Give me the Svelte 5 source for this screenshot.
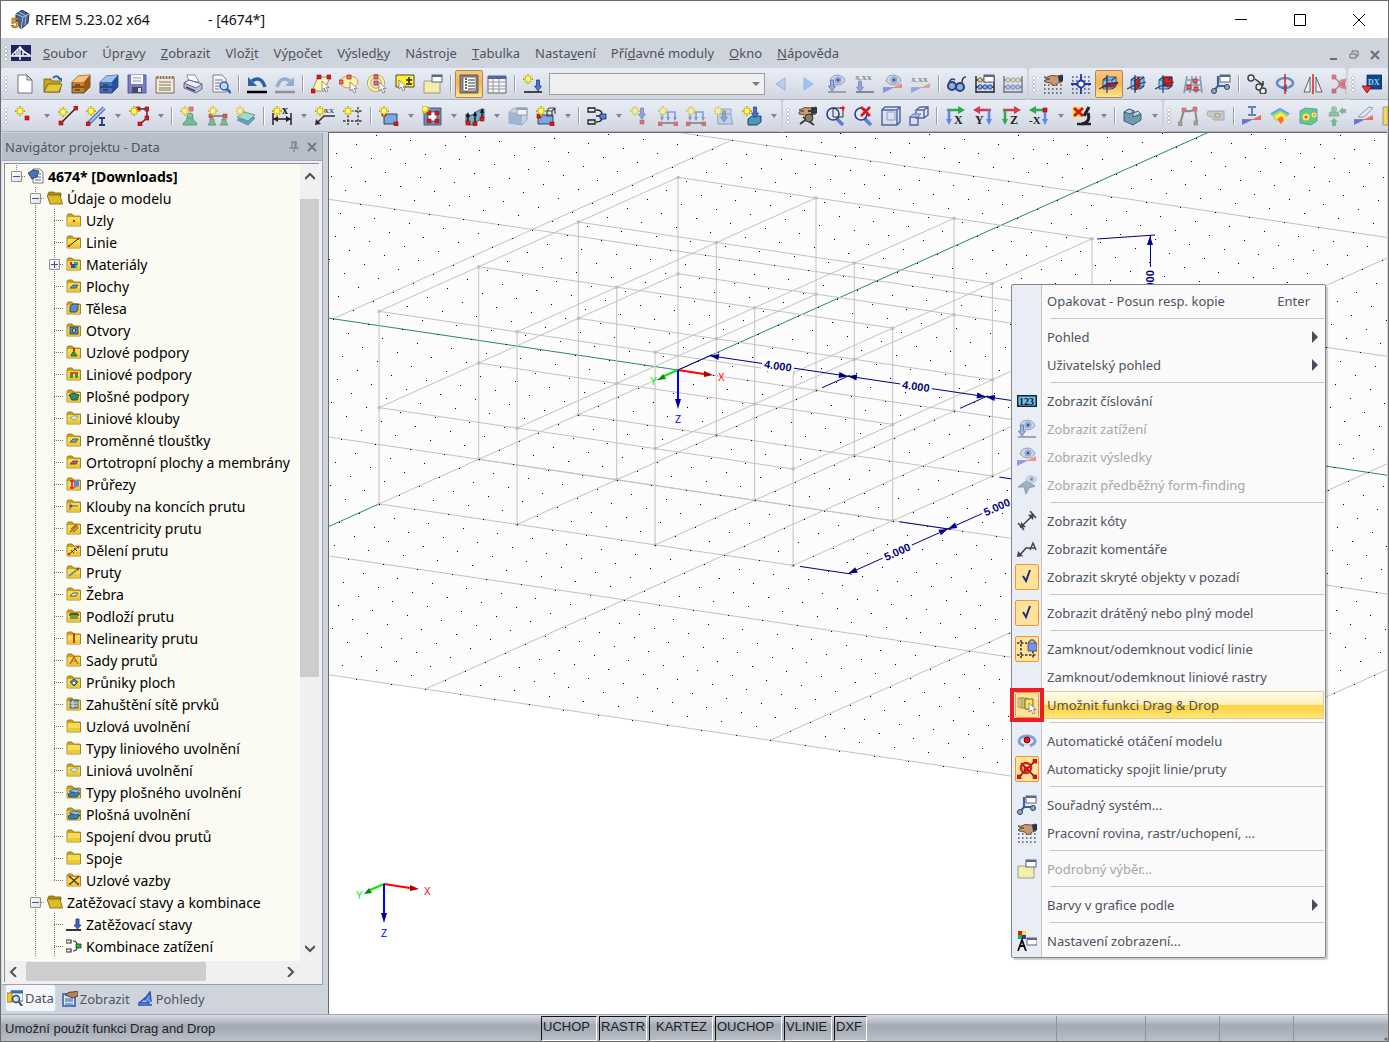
<script lang="ts">
  // ---------- icon parts ----------
  const star = (x = 0, y = 0) =>
    `<g transform="translate(${x} ${y})"><path d="M5 0v10M0 5h10M2 2l6 6M8 2l-6 6" stroke="#b3a21c" stroke-width="1.800"/><path d="M5 1v8M1 5h8M2.500 2.500l5 5M7.500 2.500l-5 5" stroke="#fff13a" stroke-width="1.200"/><circle cx="5" cy="5" r="2" fill="#fff97a"/></g>`;
  const node = (x: number, y: number, c = '#e01818') =>
    `<rect x="${x - 2}" y="${y - 2}" width="4" height="4" fill="${c}" stroke="#8a1010" stroke-width=".6"/>`;
  const faded = (s: string) => `<g opacity=".55">${s}</g>`;
  const line = (d: string, c = '#222', w = 1.4) => `<path d="${d}" fill="none" stroke="${c}" stroke-width="${w}"/>`;
  const fill = (d: string, c: string, s = 'none') => `<path d="${d}" fill="${c}" stroke="${s}" stroke-width=".8"/>`;
  const eye = (x: number, y: number) =>
    `<g transform="translate(${x} ${y})"><path d="M0 6Q1 0 8 0Q14 1 15 6Q12 10 8 10Q3 10 0 6z" fill="#c6cfe0" stroke="#77829c"/><circle cx="8" cy="5" r="3.500" fill="#6a8fdc"/><circle cx="8" cy="5" r="1.300" fill="#112"/></g>`;
  const cursor = (x: number, y: number) =>
    `<path transform="translate(${x} ${y})" d="M0 0v9l2.200-2 1.800 4 2-1-1.800-3.500h3z" fill="#fff" stroke="#777" stroke-width=".8"/>`;
  const label = (t: string, x: number, y: number, c = '#222', s = 9) =>
    `<text x="${x}" y="${y}" font-family="Liberation Serif" font-weight="bold" font-size="${s}" fill="${c}">${t}</text>`;
  const down = (x: number, y: number, c = '#4a74d4') =>
    fill(`M${x - 1.5} ${y}h3v6h2l-3.500 5-3.500-5h2z`, c, '#2a3f80');
  const win = (x: number, y: number) =>
    `<rect x="${x}" y="${y}" width="10" height="7" fill="#fff" stroke="#5b6579"/><path d="M${x} ${y + 1}h10" stroke="#5a678c" stroke-width="2"/>`;
  const drawer = (a: string, b: string, c: string) =>
    fill('M1 8l6-6 12-1v12l-6 6H1z', b, '#333') + fill('M1 8l6-6 12-1-6 7z', a) + fill('M13 8l6-7v12l-6 6z', c) + line('M1 13h12M4 11h5M4 16h5', '#222', 1.2);
  const triad = (b: string) =>
    fill('M4 6h9v9H4zM8 3h9v9H8z', '#8fc3ea', '#15466f') + fill(b, '#e01c1c', '#700') + line('M0 15l8-4 11-3M8 1v18M4 6l4-3M13 6l4-3M13 15l4-3', '#15466f', 1.2);
  const dots = (c = '#555') => `<path d="M1 3h18M1 7h18M1 11h18M1 15h18M1 19h18" stroke="${c}" stroke-width="1.600" stroke-dasharray="1.600 2.400"/>`;
  const hand = fill('M2 4q6-4 12-2l5-1v7l-4 1q-3 4-6 2l-1-2-6-1v-2l5-1z', '#c89a72', '#5a3a22') + fill('M15 2l5-1v6l-4 1z', '#26324e');
  const axes = (h: string, v: string, flip: boolean) =>
    `<g${flip ? ' transform="translate(20 0) scale(-1 1)"' : ''}><path d="M2 4h12" stroke="${h}" stroke-width="2.500"/><path d="M13 0l7 4-7 4z" fill="${h}"/><path d="M4 4v10" stroke="${v}" stroke-width="2.500"/><path d="M1 13h6l-3 6z" fill="${v}"/></g>`;
  const ribbon = fill('M0 13h19v1H0z', '#888') + fill('M19 9v5H9z', '#ee6a6a') + fill('M0 19v-5h10z', '#6a70ee');
  const abacus =
    line('M1 2v17M19 2v17M1 18h18M1 6h18M1 13h18', '#222', 1.4) +
    [4, 9, 14].map((x) => `<circle cx="${x + 1}" cy="6" r="2.200" fill="#e8d878" stroke="#665"/><circle cx="${x + 1}" cy="13" r="2.200" fill="#8fb0f8" stroke="#2a3f90"/>`).join('');
  const magnifier = '<path d="M11 12l7 7" stroke="#5a7fd8" stroke-width="3.500"/><circle cx="8" cy="8" r="6" fill="#dbe8fa" stroke="#2d3f7c" stroke-width="1.600"/>';
  const boxes = line('M1 2h7v4H1zM1 14h7v4H1z', '#222', 1.3) + line('M9 4q6 0 6 4M9 16q6 0 6-4', '#222', 1.3);
  const coord = line('M7 2v10l-5 6M7 12h10', '#3d62a4', 2.2) + '<circle cx="3" cy="17" r="2.500" fill="#88a8dc" stroke="#345"/><circle cx="16" cy="13" r="2.500" fill="#88a8dc" stroke="#345"/>' + win(9, 1);
  const person = '<circle cx="10" cy="10" r="3" fill="#5cc07c" stroke="#2a6a40"/>' + fill('M7 12h6l1 3q3 1 3 4H3q0-3 3-4z', '#4fb070', '#2a6a40');
  const panes = line('M1 3h4v9H1zM3 3h4v10H3zM5 3h5v10H5z', '#a89c60', 1) + fill('M8 4h8v10H8z', '#ffe84a', '#444');

  const icons: Record<string, string> = {
    new: fill('M3 1h9l5 5v13H3z', '#fff', '#555') + fill('M12 1v5h5z', '#ddd', '#555'),
    open: fill('M1 5h7l1 2h8v11H1z', '#c9a51c', '#6b5a10') + fill('M1 18l4-8h14l-3 8z', '#e4c83a', '#6b5a10') + line('M10 4q4-4 7 1', '#3b69a8', 2) + fill('M14 4h5v4z', '#3b69a8'),
    base: drawer('#f4c27a', '#c98028', '#9a5c12'),
    blue: drawer('#9cc0f0', '#3f70c8', '#26509c'),
    save: fill('M1 1h18v18H1z', '#7a7cc4', '#44468a') + fill('M4 1h12v9H4z', '#f4f6fa') + line('M6 4h8M6 7h8', '#99a', 1) + fill('M5 13h10v6H5z', '#444a66') + fill('M11 14h3v4h-3z', '#ddd'),
    notes: fill('M1 3h18v16H1z', '#f6ead6', '#6b4a30') + fill('M2 2h16v3H2z', '#8c6848') + line('M4 1v4M7 1v4M10 1v4M13 1v4M16 1v4', '#fff', 1) + line('M4 8h12M4 11h12M4 14h12M4 16h12', '#776', 1),
    print: fill('M4 1h8l4 7H6z', '#fff', '#778') + fill('M1 9l5-3 13 4v5l-6 4-12-5z', '#b9bfe2', '#4c4f74') + fill('M1 9l5-3 13 4-6 4z', '#eef0f8', '#4c4f74') + line('M3 13l9 4', '#444', 1.5),
    preview: fill('M2 1h9l4 4v13H2z', '#f4f6fa', '#667') + line('M4 6h8M4 9h5M4 12h4M4 15h4', '#778', 1.2) + '<circle cx="13" cy="12" r="4" fill="#bcd6f4" stroke="#2d62a8" stroke-width="1.500"/><path d="M16 15l4 4" stroke="#2d62a8" stroke-width="2.500"/>',
    undo: line('M5 7q9-6 13 6', '#2f5fa6', 3.5) + fill('M1 3v9h9z', '#2f5fa6') + line('M0 18h20', '#000', 2.5),
    redo: faded(line('M15 7q-9-6-13 6', '#4f84bc', 3.5) + fill('M19 3v9h-9z', '#4f84bc') + line('M0 18h20', '#555', 2.5)),
    selPoly: fill('M1 17L7 3h12l-6 14z', '#fdf8b0', '#777') + node(2, 17) + node(8, 3) + node(18, 3) + cursor(11, 7),
    selOval: '<ellipse cx="10" cy="8" rx="9" ry="6" fill="#fbf3a8" stroke="#c89a60"/>' + node(2, 8, '#f07070') + node(10, 3, '#f07070') + cursor(11, 8),
    selRing: '<circle cx="9" cy="9" r="7" fill="none" stroke="#b8a040" stroke-width="4"/><circle cx="9" cy="9" r="7" fill="none" stroke="#fbf3a8" stroke-width="2.500"/>' + node(9, 9, '#f07070') + node(9, 3, '#f07070') + cursor(12, 8),
    selAdd: fill('M1 1h18v12H1z', '#ffef30', '#222') + line('M14 3v6M11 6h6M11 10h6', '#222', 1.5) + cursor(4, 6),
    detail: fill('M1 7h16v12H1z', '#f3eeae', '#8a8870') + win(9, 1),
    nav: fill('M1 1h18v18H1z', '#8a8a8a', '#444') + fill('M4 3h13v14H4z', '#fff', '#555') + line('M9 6h7M9 9h7M9 12h7M9 15h7', '#333', 1.2) + line('M6 5h2M6 8h2M6 11h2M6 14h2', '#333', 1.5),
    table: fill('M1 2h18v17H1z', '#f6f6fa', '#444') + fill('M1 2h18v3H1z', '#50699c') + line('M1 8h18M1 12h18M1 15h18M6 5v14M12 5v14', '#999', 1),
    loadCase: star(0, 0) + line('M1 18h18', '#444', 2) + down(15, 6),
    prev: fill('M14 4v12L5 10z', '#b9cdf0', '#8aa6d8'),
    next: fill('M5 4v12l9-6z', '#9cc4f4', '#8ab0e0'),
    eyeLoad: `<g opacity=".7">${eye(3, 1) + line('M1 18h18', '#888', 2) + down(5, 6, '#7f9de4')}</g>`,
    valLoad: faded(label('X.XX', 0, 6, '#222', 7) + line('M1 18h18', '#444', 2) + down(5, 7)),
    eyeRes: `<g opacity=".7">${eye(3, 1) + ribbon}</g>`,
    valRes: faded(label('X.XX', 0, 8, '#222', 7) + ribbon),
    glasses: '<circle cx="5" cy="12" r="4" fill="#8fb0e0" stroke="#2b4474" stroke-width="2"/><circle cx="13" cy="13" r="4" fill="#8fb0e0" stroke="#2b4474" stroke-width="2"/>' + line('M2 9q2-6 6-3M15 9q0-6 4-6', '#2b4474', 1.6),
    calc: abacus + win(9, 1),
    calcOff: faded(abacus),
    grid: dots() + hand,
    snap: dots() + line('M10 0v20M0 10h20', '#1a34b8', 1.8) + '<circle cx="10" cy="10" r="3.500" fill="#fff" stroke="#1a34b8" stroke-width="1.800"/>',
    planeXY: triad('M3 13l6-4h10l-7 4z'),
    planeYZ: triad('M8 7l4-4v10l-4 4z'),
    planeXZ: triad('M9 3h8v9H9z'),
    mesh: faded(line('M4 2L1 19M9 2L7 19M13 2v17M17 2l2 17M3 6h15M2 11h16M1 16h18', '#3c6384', 1.6)) + node(12, 7, '#f06060') + node(6, 13, '#f06060') + node(13, 15, '#f06060'),
    coord,
    copyNode: line('M8 5l8 6M16 7v4h-4', '#333', 1.5) + '<circle cx="4" cy="4" r="3" fill="#eee" stroke="#444" stroke-width="1.500"/><circle cx="12" cy="13" r="3" fill="#eee" stroke="#444" stroke-width="1.500"/><circle cx="16" cy="17" r="3" fill="#eee" stroke="#444" stroke-width="1.500"/>',
    rotate: '<ellipse cx="10" cy="9" rx="8" ry="5" fill="none" stroke="#5f8fc8" stroke-width="2.500"/>' + fill('M12 10v8l-6-4z', '#4878b4') + line('M10 0v20', '#e02020', 1.5),
    mirror: fill('M7 3v15H1z', '#eee', '#444') + fill('M13 3v15h6z', '#eee', '#444') + line('M10 0v20', '#e02020', 1.5),
    connect: faded(line('M2 2l16 16M18 2L2 18', '#a33', 1.5) + '<circle cx="12" cy="10" r="4" fill="none" stroke="#c22" stroke-width="1.500"/>' + node(3, 3) + node(17, 17) + node(3, 17) + node(12, 10)),
    dxf: fill('M5 1h15v14H5z', '#12488a', '#0a2c58') + label('DX', 6, 11, '#9cd0ff', 8) + fill('M0 12h10l-5 7z', '#e83838', '#800'),
    node: star(0, 0) + node(12, 12),
    lineNew: line('M3 17L18 2', '#222', 1.5) + node(3, 17) + node(18, 2) + star(0, 1),
    member: line('M3 17L18 2', '#4468a8', 4) + line('M3 17L18 2', '#a8c4ee', 2) + node(2, 18) + star(0, 0) + line('M13 12h6M13 19h6M16 12v7', '#1d3f8a', 1.8),
    poly: line('M8 3h10v9l-7 6', '#333', 1.5) + node(9, 3) + node(18, 3) + node(18, 12) + node(11, 18) + star(0, 0),
    support: `<g opacity=".7">${person + node(11, 3, '#f05050') + star(0, 0)}</g>`,
    supportLine: `<g opacity=".7">${line('M4 10h13', '#333') + node(3, 10) + node(17, 10) + fill('M2 13h4v3l2 3H0l2-3zM14 13h4v3l2 3h-8l2-3z', '#4fb070', '#2a6a40') + star(0, 0)}</g>`,
    supportArea: `<g opacity=".7">${fill('M1 14l7-5 11 3-7 7z', '#2e8ac0', '#356') + fill('M1 11l7-5 11 3-7 6z', '#7be3b4', '#356') + star(-1, 0)}</g>`,
    dim: line('M1 7v12M19 7v12M1 13h18', '#222', 1.5) + fill('M1 13l5-3v6zM19 13l-5-3v6z', '#222') + label('x', 10, 8, '#222', 12) + star(0, 0),
    comment: line('M2 17l7-7h11', '#333', 1.5) + fill('M0 19l1-6 5 5z', '#333') + label('XX', 9, 7, '#445', 7) + star(0, 0),
    guides: `<path d="M5 1v18M15 1v18M0 5h20M0 15h20" stroke="#333" stroke-width="1.300" stroke-dasharray="2.500 1.500"/>` + star(0, 0),
    surface: fill('M5 8h13v10H5z', '#7aa9dd', '#224') + node(5, 8) + node(17, 18) + star(0, 0),
    opening: fill('M2 2h17v17H2z', '#6f95c4', '#345') + fill('M6 6h9v9H6z', '#fff', '#345') + node(7, 7) + node(15, 7) + node(7, 15) + node(15, 15) + star(-2, -2),
    shell: fill('M1 8q5 3 9-1t9-4v10q-5 0-9 4t-9 0z', '#7aa9c4', '#244') + line('M3 17V9M10 18V7M17 13V4', '#111', 1.4) + fill('M1 11l2-5 2 5zM8 10l2-5 2 5zM15 7l2-5 2 5z', '#111') + node(3, 17) + node(10, 18) + node(17, 13),
    solid: faded(fill('M1 6l5-4h13v12l-5 5-13-2z', '#b5c8de', '#5a6a84') + fill('M1 6l13 1v12l-13-2z', '#6c94c4') + win(9, 2)),
    solidNew: fill('M2 9h15v9H2z', '#7aa9dd', '#224') + line('M11 5h5v5h-5zM13 2h6v6M11 5l2-3M16 5l3-3', '#444', 1.2) + node(3, 10) + node(16, 18) + star(0, 0),
    combo: boxes + fill('M13 8h6v5h-6z', '#4a86dc', '#224') + line('M9 10h4', '#222', 1.3),
    nodeLoad: faded(down(12, 2) + node(12, 16) + star(0, 0)),
    lineLoad: faded(line('M4 14V6h13v8M10 6v8', '#3c66c8', 1.6) + fill('M2 11h4l-2 4zM8 11h4l-2 4zM15 11h4l-2 4z', '#3c66c8') + line('M1 17h18', '#333', 1.5) + node(2, 18) + node(18, 18) + star(0, 0)),
    areaLoad: faded(fill('M3 3h14v8l2 7H4z', '#a9c6e8', '#456') + down(10, 5) + line('M5 8h11', '#456', 1) + star(-1, 0)),
    solidLoad: fill('M6 13l4-3h9v6l-4 3H6z', '#4c98b8', '#123') + down(13, 1) + star(0, 0),
    pan: hand + line('M15 1v9M11 5h8M3 18l12-9M6 11l11 8', '#3a3a3a', 2) + '<circle cx="12" cy="12" r="4" fill="#8a7a60" stroke="#333"/>',
    zoomWin: magnifier + line('M8 2h10v9H8z', '#333', 1) + line('M18 0v5M15 2h5', '#e01818', 1.3),
    zoomAll: magnifier + line('M8 1l9 9M17 1l-9 9', '#d81818', 2.5),
    wireBox: line('M1 4l3-3h15v15l-3 3H1zM1 4h15l3-3M16 4v15', '#5366a8', 1.5) + line('M6 6h8v8H6z', '#8aa0d0', 1),
    hideBox: line('M7 4l4-3h8v8l-4 3H7zM7 4h8l4-3M15 4v8M1 11h8v8H1z', '#5366a8', 1.4) + fill('M1 11l3-3h8l-3 3z', '#b8c4e4', '#5366a8'),
    viewX: axes('#2aac4c', '#5c86f0', false) + label('X', 9, 18, '#222', 12),
    viewY: axes('#d83850', '#5c86f0', true) + label('Y', 2, 18, '#222', 12),
    viewZ: axes('#d83850', '#2aac4c', false) + label('Z', 9, 18, '#222', 12),
    viewMX: axes('#2aac4c', '#5c86f0', true) + node(16, 4) + label('-X', 0, 18, '#222', 11),
    micro: fill('M1 1h9v10H1z', '#ffe020') + line('M2 2l9 8M11 2l-9 8', '#d81010', 3) + line('M10 18q9-2 6-11M17 1l-5 9', '#222', 3) + line('M5 18h14', '#222', 2.5),
    iso: fill('M1 6l5-3 5 2v5l7-2v6l-8 5-9-4z', '#6f9cb4', '#345') + fill('M1 6l5-3 5 2-4 3z', '#b4d4e2', '#345') + fill('M10 11l8-3-3-3-5 2z', '#b4d4e2', '#345'),
    frame: faded(line('M2 18L6 4q6 3 11-1l2 14', '#444', 2) + node(6, 4) + node(17, 3) + node(2, 18, '#30a040') + node(18, 17, '#30a040')),
    tag: fill('M1 7q0-2 3-2h14v9H8l-2-3q-5 0-5-4z', '#c8c8cc', '#9a9aa0') + fill('M9 8h5v3H9z', '#e8e080', '#888'),
    ibeam: line('M6 1h8M6 9h8M10 1v8', '#6a82b8', 2) + ribbon,
    rainbow: fill('M1 8l9-6 9 6-7 10-6-3z', '#7de07a') + fill('M4 10l7-4 6 5-5 7-4-2z', '#ffe84a') + fill('M7 13l5-3 2 4-3 4z', '#ff6a4a') + line('M1 8l9-5 9 5', '#6a9ae8', 2),
    rainbowBox: fill('M2 5l5-3 12 1v12l-6 4-11-2z', '#5fc88a', '#68a') + '<circle cx="8" cy="11" r="3.500" fill="#ffe84a"/><circle cx="8" cy="11" r="1.500" fill="#f44"/><circle cx="16" cy="9" r="2.500" fill="#ffe84a"/><circle cx="16" cy="9" r="1" fill="#f66"/>',
    reaction: faded('<circle cx="8" cy="3" r="3" fill="#4fb070"/>' + fill('M4 6h8l1 4H3z', '#4fb070', '#2a6a40') + fill('M6 20v-4H4l4-4 4 4h-2v4z', '#2c9c3c') + fill('M20 3h-3V1l-4 4 4 4V7h3z', '#2c9c3c')),
    blade: ribbon + fill('M4 11L15 1l4 1-9 9z', '#dfe6f2', '#7a88a4'),
    stripe: fill('M1 1h5v18H1z', '#f2da60', '#887'),
    numbering: fill('M0 4h20v12H0z', '#16242e') + fill('M1.500 5.500h17v9h-17z', '#74bfe8') + label('123', 2, 14, '#07121a', 10),
    formFind: faded(fill('M1 12l8-6 9 5-6 2-3 6-2-7z', '#5c80ac', '#345') + `<g transform="translate(9 0) scale(.7)">${eye(0, 1)}</g>`),
    dims: line('M4 16L16 4M1 12l6 7M13 0l6 7', '#444', 1.5) + fill('M3 17l1-6 5 5zM17 3l-1 6-5-5z', '#444'),
    comments: line('M2 17l7-8h4', '#444', 1.6) + fill('M0 18l1-6 5 5z', '#444') + line('M13 11l3-7 3 7M14 9h4', '#444', 1.4),
    lock: `<path d="M4 1v18M0 4h10M0 16h20M16 12v8" stroke="#333" stroke-width="1.500" stroke-dasharray="2.500 1.500"/>` + line('M12 5V3q3-4 6 0v2', '#778', 2) + fill('M11 4h9v8h-9z', '#6f96ea', '#446'),
    drag: panes + cursor(12, 8),
    auto: '<ellipse cx="10" cy="10" rx="8" ry="5" fill="#eef" stroke="#7f9fd0" stroke-width="3"/><circle cx="10" cy="9" r="3" fill="#e01818" stroke="#700"/><path d="M7 16h6" stroke="#e9edf6" stroke-width="5"/>',
    join: line('M2 18L18 2M4 4l14 14', '#5a1a1a', 1.5) + '<circle cx="9" cy="9" r="5" fill="none" stroke="#e01818" stroke-width="2.500"/>' + node(2, 18) + node(18, 2) + node(18, 18) + node(9, 10),
    display: fill('M1 0h4v4H1z', '#e01818') + fill('M5 0h4v4H5z', '#ffe020') + fill('M1 4h4v4H1z', '#18b838') + fill('M5 4h4v4H5z', '#2030e0') + line('M1 20l4-11 4 11M2 15h6', '#111', 1.8) + win(10, 7),
  };

  // ---------- toolbars ----------
  // '|' separator, '[]' combo box, trailing '>' = drop arrow, '!' = pressed
  const rows = [
    [
      'new open base blue save notes print preview | undo redo | selPoly selOval selRing selAdd detail | nav! table | loadCase [] prev next eyeLoad valLoad eyeRes valRes | glasses calc calcOff',
      'grid snap planeXY! planeYZ planeXZ mesh coord | copyNode rotate mirror connect',
      'dxf',
    ],
    [
      'node> lineNew member> poly> | support supportLine supportArea | dim> comment guides | surface> opening> shell> solid solidNew> | combo> nodeLoad lineLoad lineLoad areaLoad solidLoad>',
      'pan zoomWin zoomAll wireBox hideBox | viewX viewY viewZ viewMX> micro> | iso>',
      'frame tag | ibeam rainbow rainbowBox reaction blade stripe',
    ],
  ];

  const menus = [
    ['', 'S', 'oubor'], ['Úpr', 'a', 'vy'], ['', 'Z', 'obrazit'], ['Vlož', 'i', 't'], ['Vý', 'p', 'očet'], ['Výsled', 'k', 'y'],
    ['Nástro', 'j', 'e'], ['', 'T', 'abulka'], ['Nasta', 'v', 'ení'], ['Pří', 'd', 'avné moduly'], ['', 'O', 'kno'], ['', 'N', 'ápověda'],
  ];

  // ---------- navigator ----------
  const closed = fill('M1 3.500l1-1.500h4l2 2h6.500v10H1z', '#c9a417', '#8a7220') + fill('M1.500 5h12.500v8.500H1.500z', '#f6dc50') + fill('M1.500 10h12.500v3.500H1.500z', '#ecc93a');
  const openFolder = fill('M1 4l1-2h5l1 1h6v3H1z', '#b38f18', '#7a6210') + fill('M0 5h13l2.500 9H3z', '#dcb92a', '#7a6210');
  const over = (s: string) => closed + s;
  const slab = (c: string) => over(fill('M4 10l3-3 5 0-2 3z', c, '#345'));
  const treeIcons: Record<string, string> = {
    root: fill('M5 1h7l3 3v11H5z', '#fff', '#556') + line('M7 12h6M9 9h4M11 6h2', '#667', 1) + fill('M0 5l5-3 6 1-2 6-5 2z', '#4a72b8', '#235'),
    group: openFolder, closed,
    uzly: over(fill('M7 8h2v2H7z', '#e01818')),
    linie: over(line('M3 12l9-7', '#222', 1) + fill('M2 11h2v2H2zM11 4h2v2h-2z', '#e01818')),
    mat: over(fill('M4 6h2v3H4z', '#e01818') + fill('M8 6h4v3H8z', '#18a8c8') + fill('M5 8h6v4H5z', '#3a48c8') + fill('M9 9h2v3H9z', '#2c4')),
    plochy: slab('#5c9ae0'), tloust: slab('#6caaf0'), orto: slab('#d85070'), zebra: slab('#e4e4e4'),
    teleso: over(fill('M4 6l3-2h5v6l-2 2H4z', '#5c8cc8', '#235')),
    otvor: over(fill('M4 5h8v7H4z', '#5c8cc8', '#235') + fill('M6.500 7h3v3h-3z', '#f6dc50', '#235')),
    podpora: over(fill('M5 12l1-3 2-2 3 5z', '#2a9c4c', '#163') + fill('M7 4h2v3H7z', '#e01818')),
    liniova: over(line('M4 7h8', '#e01818', 1.5) + fill('M4 8h3v4H4zM9 8h3v4H9z', '#2a9c4c')),
    plosna: over(fill('M3 7l4-2 6 2-2 5H6z', '#2f8c6c', '#134')),
    kloub: over(fill('M4 8l3-2h5l-3 4z', '#e8eefa', '#789')),
    prurez: over(line('M4 5h4M4 12h4M6 5v7', '#e01838', 1.5) + fill('M8 5l5-1v6l-5 2z', '#6880e0')),
    konec: over(line('M4 5v7M6 8h6', '#789', 1.3) + '<circle cx="5" cy="8" r="1.500" fill="#a33"/>'),
    exc: over(line('M4 12l7-6M5 9l5-4 2 3-5 4', '#a06020', 1.2)),
    deleni: over(line('M3 12l9-7M5 8l3 3M8 6l3 3', '#333', 1) + fill('M2 11h2v2H2zM11 4h2v2h-2z', '#e01818')),
    prut: over(line('M3 12l9-7', '#6f90a8', 2) + fill('M11 4h2v2h-2z', '#e01818')),
    podlozi: over(line('M4 6h8', '#222', 1.5) + line('M5 7v4M7 7v4M9 7v4M11 7v4', '#2a8c4c', 1.5) + fill('M3 6h1v2H3zM12 6h1v2h-1z', '#e01818')),
    nelin: over(line('M8 3v10', '#c33', 2)),
    sada: over(line('M4 12l4-7 4 7M5 9h6', '#c05030', 1.2)),
    prunik: over(fill('M4 8l4-3 4 3-4 4z', '#4a90c0', '#235') + fill('M7 8h2v2H7z', '#fff')),
    sit: over(fill('M4 4h8v8H4z', '#7a90a8', '#345') + line('M4 7h8M4 10h8M7 4v8', '#d8e0e8', 1)),
    vrstva: over(fill('M2 10l4-2 8 1-3 4H3z', '#3a80b8', '#235') + fill('M3 7l4-2 7 1-3 3z', '#8cc4ec', '#357')),
    vazba: over(line('M4 5l8 7M12 5l-8 7', '#333', 1.2) + fill('M3 4h2v2H3zM11 4h2v2h-2zM3 11h2v2H3zM11 11h2v2h-2z', '#e01818')),
    stav: line('M0 14h15', '#333', 2) + fill('M10 3h3v6h2l-3.500 4-3.500-4h2z', '#3c66c8', '#236'),
    komb: line('M0 2h5v3H0zM0 11h5v3H0zM7 3q4 0 4 4M7 13q4 0 4-4', '#333', 1.2) + fill('M10 6h5v4h-5z', '#22b838', '#143'),
  };

  type Row = { level: number; text: string; icon: string; box?: string; last?: boolean };
  const leaves: [string, string][] = [
    ['Uzly', 'uzly'], ['Linie', 'linie'], ['Materiály', 'mat'], ['Plochy', 'plochy'], ['Tělesa', 'teleso'], ['Otvory', 'otvor'],
    ['Uzlové podpory', 'podpora'], ['Liniové podpory', 'liniova'], ['Plošné podpory', 'plosna'], ['Liniové klouby', 'kloub'],
    ['Proměnné tloušťky', 'tloust'], ['Ortotropní plochy a membrány', 'orto'], ['Průřezy', 'prurez'], ['Klouby na koncích prutu', 'konec'],
    ['Excentricity prutu', 'exc'], ['Dělení prutu', 'deleni'], ['Pruty', 'prut'], ['Žebra', 'zebra'], ['Podloží prutu', 'podlozi'],
    ['Nelinearity prutu', 'nelin'], ['Sady prutů', 'sada'], ['Průniky ploch', 'prunik'], ['Zahuštění sítě prvků', 'sit'],
    ['Uzlová uvolnění', 'closed'], ['Typy liniového uvolnění', 'closed'], ['Liniová uvolnění', 'kloub'], ['Typy plošného uvolnění', 'vrstva'],
    ['Plošná uvolnění', 'vrstva'], ['Spojení dvou prutů', 'closed'], ['Spoje', 'closed'], ['Uzlové vazby', 'vazba'],
  ];
  const tree: Row[] = [
    { level: 0, text: '4674* [Downloads]', icon: 'root', box: '-' },
    { level: 1, text: 'Údaje o modelu', icon: 'group', box: '-' },
    ...leaves.map(([text, icon]) => ({ level: 2, text, icon, box: icon === 'mat' ? '+' : '', last: icon === 'vazba' })),
    { level: 1, text: 'Zatěžovací stavy a kombinace', icon: 'group', box: '-' },
    { level: 2, text: 'Zatěžovací stavy', icon: 'stav' },
    { level: 2, text: 'Kombinace zatížení', icon: 'komb' },
  ];

  // ---------- context menu ----------
  type Item = { text: string; icon?: string; off?: boolean; on?: boolean; sub?: boolean; key?: string; hot?: boolean; check?: boolean };
  const groups: Item[][] = [
    [{ text: 'Opakovat - Posun resp. kopie', key: 'Enter' }],
    [{ text: 'Pohled', sub: true }, { text: 'Uživatelský pohled', sub: true }],
    [
      { text: 'Zobrazit číslování', icon: 'numbering' },
      { text: 'Zobrazit zatížení', icon: 'eyeLoad', off: true },
      { text: 'Zobrazit výsledky', icon: 'eyeRes', off: true },
      { text: 'Zobrazit předběžný form-finding', icon: 'formFind', off: true },
    ],
    [
      { text: 'Zobrazit kóty', icon: 'dims' },
      { text: 'Zobrazit komentáře', icon: 'comments' },
      { text: 'Zobrazit skryté objekty v pozadí', on: true, check: true },
    ],
    [{ text: 'Zobrazit drátěný nebo plný model', on: true, check: true }],
    [
      { text: 'Zamknout/odemknout vodicí linie', icon: 'lock', on: true },
      { text: 'Zamknout/odemknout liniové rastry' },
      { text: 'Umožnit funkci Drag & Drop', icon: 'drag', on: true, hot: true },
    ],
    [
      { text: 'Automatické otáčení modelu', icon: 'auto' },
      { text: 'Automaticky spojit linie/pruty', icon: 'join', on: true },
    ],
    [
      { text: 'Souřadný systém...', icon: 'coord' },
      { text: 'Pracovní rovina, rastr/uchopení, ...', icon: 'grid' },
    ],
    [{ text: 'Podrobný výběr...', icon: 'detail', off: true }],
    [{ text: 'Barvy v grafice podle', sub: true }],
    [{ text: 'Nastavení zobrazení...', icon: 'display' }],
  ];

  // ---------- model ----------
  // metres to screen, relative to the origin of the axes
  const px = (x: number, y: number) => 34.5 * x - 19.93 * y;
  const py = (x: number, y: number, z = 0) => 5.12 * x + 8.93 * y - 32.1 * z;
  const seg = (a: number[], b: number[]) =>
    `M${px(a[0], a[1]).toFixed(1)} ${py(a[0], a[1], a[2]).toFixed(1)}L${px(b[0], b[1]).toFixed(1)} ${py(b[0], b[1], b[2]).toFixed(1)}`;

  let dotPath = '';
  for (let x = -40; x <= 30; x++)
    for (let y = -50; y <= 30; y++) {
      const sx = Math.round(px(x, y));
      const sy = Math.round(py(x, y));
      if (sx > -360 && sx < 760 && sy > -260 && sy < 700) dotPath += `M${sx} ${sy}h1`;
    }

  let rasterPath = '';
  for (const x of [-10, 10, 20, 30]) rasterPath += seg([x, x === -10 ? -20 : -30, 0], [x, x === -10 ? 0 : 30, 0]);
  for (const y of [-20, -10, 10, 20, 30]) rasterPath += seg([-20, y, 0], [30, y, 0]);

  let framePath = '';
  let nodePath = '';
  const xs = [0, 4, 8, 12];
  const ys = [0, 5, 10, 15];
  for (const z of [0, 3, 6]) {
    for (const y of ys) framePath += seg([0, y, z], [12, y, z]);
    for (const x of xs) framePath += seg([x, 0, z], [x, 15, z]);
    for (const x of xs) for (const y of ys) nodePath += `M${px(x, y) - 1.5} ${py(x, y, z)}h3`;
  }
  for (const x of xs) for (const y of ys) framePath += seg([x, y, 0], [x, y, 6]);

  const ground = [[-40, -50], [30, -50], [30, 30], [-40, 30]].map(([x, y]) => `${px(x, y)},${py(x, y)}`).join(' ');

  const dimsX = [0, 4, 8].map((x) => ({ a: [x, -1.6], b: [x + 4, -1.6], text: '4.000', turn: 8 }));
  const dimsY = [15, 10].map((y) => ({ a: [13.6, y], b: [13.6, y - 5], text: '5.000', turn: -24 }));
  const dimensions = [...dimsX, ...dimsY].map((d) => {
    const [x1, y1, x2, y2] = [px(d.a[0], d.a[1]), py(d.a[0], d.a[1]), px(d.b[0], d.b[1]), py(d.b[0], d.b[1])];
    return { ...d, x1, y1, x2, y2, mx: (x1 + x2) / 2, my: (y1 + y2) / 2 };
  });
  const extensions =
    [0, 4, 8, 12].map((x) => seg([x, x ? -0.3 : 0, 0], [x, -1.7, 0])).join('') +
    [0, 5, 10, 15].map((y) => seg([12.2, y, 0], [13.7, y, 0])).join('');
</script>

{#snippet pic(name: string)}
  <svg class="pic" viewBox="0 0 20 20" fill="none" aria-hidden="true">{@html icons[name]}</svg>
{/snippet}

{#snippet axisTriad()}
  <path d="M0 0L26 4" stroke="#f00" stroke-width="2" />
  <path d="M26 1v6l9-2z" fill="#b00000" />
  <path d="M0 0L-14 6" stroke="#0e0" stroke-width="2" />
  <path d="M-15 4l3 5-8 1z" fill="#009000" />
  <path d="M0 0v30" stroke="#00f" stroke-width="2" />
  <path d="M-3 29h6l-3 10z" fill="#0000a0" />
  <text x="40" y="11" fill="#f00">X</text>
  <text x="-28" y="15" fill="#0e0">Y</text>
  <text x="-3" y="53" fill="#00f">Z</text>
{/snippet}

<div class="window">
  <header class="title">
    <svg class="pic" viewBox="0 0 20 20" aria-hidden="true">
      <path d="M6 4l6-4 7 4-1 9-7 6-5-7z" fill="#46628a" stroke="#24344e" />
      <path d="M6 4l7 3 6-3M13 7l-2 12M9 2l7 4-1 9" fill="none" stroke="#a9c2dc" />
      <text x="1" y="18" font-family="Liberation Sans" font-weight="bold" font-size="14" fill="#f0b818" stroke="#5a4408" stroke-width=".5">5</text>
    </svg>
    <span class="app-name">RFEM 5.23.02 x64</span>
    <span>- [4674*]</span>
    <div class="controls">
      <button aria-label="Minimalizovat"><svg viewBox="0 0 12 12"><path d="M0 5.500h12" /></svg></button>
      <button aria-label="Maximalizovat"><svg viewBox="0 0 12 12"><path d="M.5.5h11v11H.5z" /></svg></button>
      <button aria-label="Zavřít"><svg viewBox="0 0 12 12"><path d="M0 0l12 12M12 0L0 12" /></svg></button>
    </div>
  </header>

  <nav class="menubar">
    <i class="grip"></i>
    <svg class="brand" viewBox="0 0 20 16" aria-hidden="true">
      <path d="M0 0h20v16H0z" fill="#1d2263" />
      <path d="M0 11h20M9 1v14M9 2L1 10M9 2q4 6 10 8M7 5v6M5 7v4M12 6v5" fill="none" stroke="#fff" stroke-width="1.400" />
    </svg>
    {#each menus as [a, key, b]}
      <button>{a}<u>{key}</u>{b}</button>
    {/each}
    <div class="mdi">
      <button aria-label="Minimalizovat okno"><svg viewBox="0 0 10 10"><path d="M2 9h7" /></svg></button>
      <button aria-label="Obnovit okno"><svg viewBox="0 0 10 10"><path d="M1 4h6v4H1zM3 3V1h6v5H7" stroke-width="1" /></svg></button>
      <button aria-label="Zavřít okno"><svg viewBox="0 0 10 10"><path d="M1 1l8 8M9 1L1 9" /></svg></button>
    </div>
  </nav>

  {#each rows as bars}
    <div class="bars">
      {#each bars as bar, n}
        <div class="toolbar" class:tail={n === 2} role="toolbar">
          <i class="grip"></i>
          {#each bar.split(' ') as id}
            {#if id === '|'}
              <i class="sep"></i>
            {:else if id === '[]'}
              <div class="combo"><select aria-label="Zatěžovací stav"><option></option></select></div>
            {:else}
              <button class="tool" class:pressed={id.endsWith('!')} class:drop={id.endsWith('>')} aria-label={id.replace(/[!>]/, '')}>
                {@render pic(id.replace(/[!>]/, ''))}
              </button>
            {/if}
          {/each}
        </div>
      {/each}
    </div>
  {/each}

  <main>
    <aside>
      <div class="panel">
        <div class="panel-head">
          <h2>Navigátor projektu - Data</h2>
          <button aria-label="Připnout"><svg viewBox="0 0 12 12"><path d="M3 1h6M4 1v6M8 1v6M7 1v6M1 7h10M6 7v4" /></svg></button>
          <button aria-label="Zavřít panel"><svg viewBox="0 0 12 12"><path d="M2 2l8 8M10 2l-8 8" stroke-width="2" /></svg></button>
        </div>
        <div class="listbox">
          <ul class="tree">
            {#each tree as row}
              <li class:root={row.level === 0}>
                {#each Array(row.level) as _, c}
                  <i class="cell" class:rail={c > 0}></i>
                {/each}
                <i class="cell joint" class:rail={row.level > 0 && !row.last} class:half={row.last || row.level === 0}>
                  {#if row.box}<button aria-label={row.text}><b class:plus={row.box === '+'}></b></button>{/if}
                </i>
                <svg viewBox="0 0 16 16" fill="none" aria-hidden="true">{@html treeIcons[row.icon]}</svg>
                <span>{row.text}</span>
              </li>
            {/each}
          </ul>
          <div class="vbar">
            <svg viewBox="0 0 10 10"><path d="M0 8l5-5 5 5" /></svg>
            <i></i>
            <svg viewBox="0 0 10 10"><path d="M0 2l5 5 5-5" /></svg>
          </div>
          <div class="hbar">
            <svg viewBox="0 0 10 10"><path d="M7 0L2 5l5 5" /></svg>
            <i></i>
            <svg viewBox="0 0 10 10"><path d="M3 0l5 5-5 5" /></svg>
          </div>
        </div>
      </div>
      <div class="tabs">
        <button class="active">
          <svg viewBox="0 0 16 16" fill="none"><path d="M4 1h12v10H4z" fill="#fff" stroke="#2f6fc0" /><path d="M4 2h12" stroke="#2f6fc0" stroke-width="3" /><path d="M0 3h5v9H0z" fill="#f4c828" stroke="#a07c10" /><circle cx="9" cy="9" r="3.500" fill="#cfe0f4" stroke="#346" stroke-width="1.500" /><path d="M12 12l3 4" stroke="#346" stroke-width="2" /></svg>
          Data
        </button>
        <button>
          <svg viewBox="0 0 16 16" fill="none"><path d="M1 3h12v12H1z" fill="#dbe8fa" stroke="#2a58a8" stroke-width="1.500" /><path d="M3 8h8M3 10h8M3 13h8" stroke="#2a58a8" /><path d="M3 4q4-4 8-3l5-1v5l-5 2z" fill="#b4845c" stroke="#543" /></svg>
          Zobrazit
        </button>
        <button>
          <svg viewBox="0 0 16 16" fill="none"><path d="M1 12l6-5 4 5zM0 14h14" fill="#9cb8ec" stroke="#2a50b8" stroke-width="1.500" /><path d="M6 9l6-8 1 10" fill="#6f94e0" stroke="#2a50b8" stroke-width="1.500" /></svg>
          Pohledy
        </button>
      </div>
    </aside>

    <section class="view">
      <svg class="scene" fill="none">
        <g transform="translate(349 237)">
          <polygon points={ground} fill="#fcfcfc" />
          <path class="grey" d={rasterPath} />
          <path class="teal" d={seg([-20, 0, 0], [0, 0, 0]) + seg([12, 0, 0], [30, 0, 0]) + seg([0, -40, 0], [0, 0, 0]) + seg([0, 15, 0], [0, 30, 0])} />
          <path class="grey" d={framePath} />
          <path d={nodePath} stroke="#bdbdbd" stroke-width="3" />
          <path class="raster" d={dotPath} />
          <path class="navy" d={extensions} />
          {#each dimensions as d}
            <path class="navy" d="M{d.x1} {d.y1}L{d.x2} {d.y2}" />
            <g transform="translate({d.x1} {d.y1}) rotate({d.turn})"><path class="tip" d="M0 0l9-3v6z" /></g>
            <g transform="translate({d.x2} {d.y2}) rotate({d.turn})"><path class="tip" d="M0 0l-9-3v6z" /></g>
            <g transform="translate({d.mx} {d.my}) rotate({d.turn})">
              <rect x="-17" y="-7" width="32" height="14" fill="#fff" />
              <text class="value" x="-1" y="4">{d.text}</text>
            </g>
          {/each}
          <g transform="translate(472 -135)">
            <path class="navy" d="M-53 4L5 0M.5 0v90" />
            <path class="tip" d="M0 1l-3 9h6z" />
            <g transform="translate(0 49) rotate(-90)">
              <rect x="-17" y="-9" width="34" height="18" fill="#fff" />
              <text class="value" y="4">6.000</text>
            </g>
          </g>
          {@render axisTriad()}
        </g>
        <g transform="translate(55 751)">{@render axisTriad()}</g>
      </svg>

      <div class="context" role="menu">
        {#each groups as group, g}
          {#if g > 0}<hr />{/if}
          {#each group as item}
            <button role="menuitem" class:hot={item.hot} disabled={item.off}>
              <span class="slot" class:on={item.on}>
                {#if item.check}
                  <svg class="pic" viewBox="0 0 20 20" fill="none"><path d="M6 9l3 5 4-11" stroke="#1d2a80" stroke-width="2" /></svg>
                {:else if item.icon}
                  {@render pic(item.icon)}
                {/if}
              </span>
              <span class="text">{item.text}</span>
              {#if item.key}<span class="key">{item.key}</span>{/if}
              {#if item.sub}<i class="sub"></i>{/if}
              {#if item.hot}<i class="mark"></i>{/if}
            </button>
          {/each}
        {/each}
      </div>
    </section>
  </main>

  <footer>
    <p>Umožní použít funkci Drag and Drop</p>
    <button class="w56">UCHOP</button>
    <button class="w48">RASTR</button>
    <button class="w64 shift">KARTEZ</button>
    <button class="w68">OUCHOP</button>
    <button class="w48">VLINIE</button>
    <button class="w32">DXF</button>
    <i class="fill"></i>
    <i class="wide"></i>
    <i></i>
    <i></i>
    <i class="end"></i>
  </footer>
</div>

<style>
  :global(body) {
    margin: 0;
  }

  .window {
    display: flex;
    flex-direction: column;
    height: 100vh;
    box-sizing: border-box;
    border: 1px solid #6b6b6b;
    background: #cfd3dc;
    color: #4d5360;
    font-family: 'Noto Sans', 'Open Sans', sans-serif;
    font-size: 13px;
    overflow: hidden;
  }

  button {
    display: flex;
    align-items: center;
    margin: 0;
    padding: 0;
    border: 0;
    background: none;
    color: inherit;
    font: inherit;
    white-space: nowrap;
  }

  .pic {
    flex: none;
    width: 20px;
    height: 20px;
  }

  .title {
    display: flex;
    flex: none;
    align-items: center;
    height: 37px;
    padding-left: 9px;
    gap: 5px;
    background: #fff;
    color: #111;
    font-size: 14px;
  }

  .app-name {
    width: 168px;
  }

  .controls {
    display: flex;
    margin-left: auto;

    & button {
      width: 59px;
      height: 37px;
      justify-content: center;
    }

    & svg {
      width: 12px;
      height: 12px;
      stroke: #000;
      fill: none;
    }
  }

  .menubar {
    display: flex;
    flex: none;
    align-items: center;
    height: 30px;
    gap: 15px;
  }

  .brand {
    width: 20px;
    height: 16px;
    margin: 0 -3px 0 -15px;
  }

  .grip {
    flex: none;
    width: 10px;
    height: 16px;
    background: radial-gradient(circle at 5px 2px, #fff 1px, #9ba1ae 1px, #9ba1ae 1px, transparent 2px) 0 0 / 10px 4px;
  }

  .mdi {
    display: flex;
    gap: 11px;
    margin: 4px 8px 0 auto;

    & svg {
      width: 10px;
      height: 10px;
      stroke: #6b6f78;
      stroke-width: 2;
      fill: none;
    }
  }

  .bars {
    display: flex;
    flex: none;
    gap: 2px;
    height: 31px;
    margin-bottom: 1px;
  }

  .toolbar {
    display: flex;
    flex: none;
    align-items: center;
    border-radius: 3px;
    background: linear-gradient(#e9edf6, #dde2ec 50%, #d0d5e0);
    box-shadow: 0 1px #adb2be;
    overflow: hidden;
  }

  .toolbar.tail {
    flex: 1 1 0;
  }

  .bars:first-of-type .toolbar:nth-child(2) {
    max-width: 317px;
  }

  .sep {
    flex: none;
    width: 2px;
    height: 18px;
    margin: 0 3px;
    background: linear-gradient(to right, #9aa0ad 50%, #fff 50%);
  }

  .tool {
    flex: none;
    justify-content: center;
    width: 28px;
    height: 28px;
    box-sizing: border-box;
  }

  .pressed {
    border: 1px solid #a58a5c;
    border-radius: 2px;
    background: linear-gradient(#fbc585, #fdb04f 45%, #fee58a);
  }

  .drop {
    width: 43px;
    justify-content: flex-start;
    padding-left: 4px;

    &::after {
      content: '';
      margin-left: 9px;
      border: 3px solid transparent;
      border-top: 4px solid #80858f;
      border-bottom: 0;
    }
  }

  .combo {
    position: relative;
    width: 216px;
    margin: 0 2px;

    & select {
      display: block;
      width: 100%;
      height: 22px;
      appearance: none;
      border: 1px solid #9a9da4;
      border-radius: 0;
      background: #f0f0f0;
    }

    &::after {
      content: '';
      position: absolute;
      right: 5px;
      top: 9px;
      border: 4px solid transparent;
      border-top-color: #7a7a7a;
      border-bottom: 0;
    }
  }

  main {
    display: flex;
    flex: 1;
    min-height: 0;
  }

  aside {
    display: flex;
    flex: none;
    flex-direction: column;
    width: 327px;
  }

  .panel {
    display: flex;
    flex: 1;
    flex-direction: column;
    min-height: 0;
    margin: 1px 5px 0 1px;
    border: 1px solid #9ca1ae;
    border-width: 0 1px 1px 0;
    background: #eef0f6;
  }

  .panel-head {
    display: flex;
    flex: none;
    align-items: center;
    gap: 6px;
    height: 27px;
    padding: 0 4px 0 3px;
    border-bottom: 1px solid #a5a9b8;
    background: #b9bfca;

    & h2 {
      flex: 1;
      margin: 0;
      font-size: 13px;
      font-weight: 400;
    }

    & svg {
      width: 12px;
      height: 12px;
      stroke: #74777e;
      fill: none;
    }
  }

  .listbox {
    display: grid;
    flex: 1;
    grid-template: minmax(0, 1fr) 21px / minmax(0, 1fr) 19px;
    min-height: 0;
    margin: 2px 3px 2px 2px;
    border: 1px solid #8b8e97;
    border-width: 1px 0 0 1px;
    background: #f0f0f0;
  }

  .tree {
    margin: 0;
    padding: 1px 0 0 2px;
    background: #fbfbf3;
    color: #000;
    font-size: 14px;
    list-style: none;
    overflow: hidden;

    & li {
      display: flex;
      align-items: center;
      height: 22px;
    }

    & li > svg {
      flex: none;
      width: 16px;
      height: 16px;
      margin: 0 4px 0 2px;
    }

    & span {
      white-space: nowrap;
    }
  }

  .root {
    font-weight: 700;
  }

  .cell {
    display: flex;
    flex: none;
    align-items: center;
    justify-content: center;
    width: 19px;
    height: 22px;
    --v: repeating-linear-gradient(to bottom, #777 0 1px, transparent 1px 2px) 9px 0 / 1px 22px no-repeat;
    --h: repeating-linear-gradient(to right, #777 0 1px, transparent 1px 2px) 9px 11px / 12px 1px no-repeat;
  }

  .rail {
    background: var(--v);
  }

  .joint {
    background: var(--h);
  }

  .joint.rail {
    background: var(--v), var(--h);
  }

  .joint.half {
    background: repeating-linear-gradient(to bottom, #777 0 1px, transparent 1px 2px) 9px 0 / 1px 11px no-repeat, var(--h);
  }

  .joint button {
    justify-content: center;
    width: 11px;
    height: 11px;
    box-sizing: border-box;
    border: 1px solid #8f8f8f;
    border-radius: 1px;
    background: linear-gradient(135deg, #fff, #e2e2e2);
  }

  .joint b {
    width: 7px;
    height: 7px;
    background: linear-gradient(#3c539c, #3c539c) 0 3px / 7px 1px no-repeat;
  }

  .joint .plus {
    background: linear-gradient(#3c539c, #3c539c) 0 3px / 7px 1px no-repeat, linear-gradient(#3c539c, #3c539c) 3px 0 / 1px 7px no-repeat;
  }

  .vbar,
  .hbar {
    display: flex;
    align-items: center;

    & svg {
      flex: none;
      width: 10px;
      height: 10px;
      stroke: #505050;
      stroke-width: 2;
      fill: none;
    }

    & i {
      background: #cdcdcd;
    }
  }

  .vbar {
    flex-direction: column;
    padding: 7px 0;

    & i {
      width: 19px;
      margin: 18px 0 auto;
      height: 61%;
    }
  }

  .hbar {
    padding: 0 5px 0 4px;

    & i {
      width: 63%;
      height: 19px;
      margin: 0 auto 0 7px;
    }
  }

  .tabs {
    display: flex;
    flex: none;
    gap: 4px;
    height: 29px;
    padding-left: 4px;

    & button {
      height: 27px;
      gap: 2px;
      padding: 0 2px;
      border-radius: 3px;
    }

    & svg {
      width: 16px;
      height: 16px;
    }

    & .active {
      padding: 0 1px;
      border: 1px solid #b8e4ea;
      border-top: 0;
      background: #f4f6fa;
    }
  }

  .view {
    position: relative;
    flex: 1;
    min-width: 0;
    margin-right: 1px;
    border: 1px solid #6b6b6b;
    border-width: 1px 0 0 1px;
    background: #fff;
  }

  .scene {
    display: block;
    width: 100%;
    height: 100%;
    font: 10px 'Liberation Sans', sans-serif;
  }

  .grey {
    stroke: #c2c2c2;
  }

  .teal {
    stroke: #2a8480;
  }

  .navy {
    stroke: #000080;
  }

  .tip {
    fill: #000080;
  }

  .raster {
    stroke: #000;
    shape-rendering: crispEdges;
  }

  .value {
    fill: #000080;
    font-size: 11px;
    font-weight: 700;
    text-anchor: middle;
  }

  .context {
    position: absolute;
    left: 682px;
    top: 151px;
    width: 315px;
    box-sizing: border-box;
    padding: 2px 1px 2px 0;
    border: 1px solid #868686;
    border-radius: 2px;
    background: linear-gradient(to right, #e9edf6 29px, #c5c5c5 29px, #c5c5c5 30px, #fafafa 30px);
    box-shadow: 2px 2px 1px rgba(0, 0, 0, 0.2);

    & button {
      position: relative;
      width: 100%;
      height: 28px;
    }

    & button:disabled {
      color: #a6a6a6;
    }

    & hr {
      height: 1px;
      margin: 3px 0 4px 38px;
      border: 0;
      background: #c5c5c5;
    }
  }

  .slot {
    display: flex;
    flex: none;
    align-items: center;
    justify-content: center;
    width: 24px;
    height: 26px;
    box-sizing: border-box;
    margin: 0 3px;
  }

  .on {
    border: 1px solid #f29536;
    border-radius: 2px;
    background: #ffe29a;
  }

  .text {
    flex: 1;
    padding-left: 5px;
    text-align: left;
  }

  .key {
    margin-right: 14px;
  }

  .sub {
    margin-right: 6px;
    border: 6px solid transparent;
    border-left-color: #454b5a;
    border-right: 0;
  }

  .hot {
    background: linear-gradient(#fffdf0, #ffefb4 48%, #ffd23c 52%, #ffe57c) 30px 0 / 100% 100% no-repeat;
    box-shadow: inset 0 1px #e0cd90, inset 0 -1px #e0cd90, inset -1px 0 #e0cd90;
  }

  .mark {
    position: absolute;
    left: -2px;
    top: -3px;
    width: 34px;
    height: 34px;
    box-sizing: border-box;
    border: 4px solid #ee1c25;
  }

  footer {
    display: flex;
    flex: none;
    height: 27px;
    box-sizing: border-box;
    border-top: 1px solid #a9a7bb;
    gap: 2px;
    padding-top: 1px;
    background: linear-gradient(#d9dbe3, #a5abb6 40%, #a9afb8 60%, #bbc0c8);
    color: #1e1e26;
    font-family: 'Liberation Sans', sans-serif;

    & p {
      width: 534px;
      margin: 0;
      padding-left: 4px;
      line-height: 25px;
    }

    & button {
      box-sizing: border-box;
      align-items: flex-start;
      height: 25px;
      padding: 2px 0 0 1px;
      border: 1px solid;
      border-color: #111 #fff #fff #111;
      overflow: hidden;
    }

    & .shift {
      padding-left: 6px;
    }

    & i {
      width: 71px;
      border-right: 1px solid #8f959f;
    }

    & .fill {
      flex: 1;
    }

    & .wide {
      width: 86px;
    }

    & .end {
      width: 92px;
      border: 0;
      background: radial-gradient(circle at 2px 2px, #666c78 1px, transparent 2px) right bottom / 4px 4px no-repeat;
    }
  }

  .w32 {
    width: 33px;
  }

  .w48 {
    width: 48px;
  }

  .w56 {
    width: 56px;
  }

  .w64 {
    width: 64px;
  }

  .w68 {
    width: 67px;
  }
</style>
